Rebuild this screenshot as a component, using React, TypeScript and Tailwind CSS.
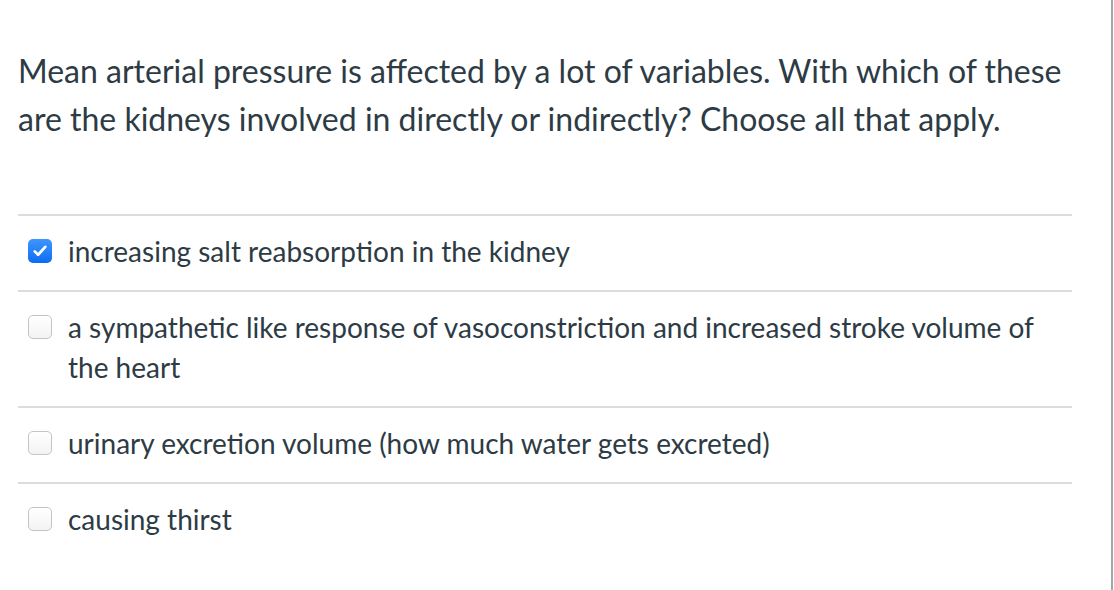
const options = [
  { text: 'increasing salt reabsorption in the kidney', checked: true },
  { text: 'a sympathetic like response of vasoconstriction and increased stroke volume of the heart', checked: false },
  { text: 'urinary excretion volume (how much water gets excreted)', checked: false },
  { text: 'causing thirst', checked: false },
]

function Box({ checked }: { checked: boolean }) {
  if (checked) {
    return (
      <span className="flex h-6 w-6 shrink-0 items-center justify-center rounded-[5px] bg-gradient-to-b from-[#3d95ff] to-[#0a6cf2]">
        <svg viewBox="0 0 24 24" className="h-[18px] w-[18px]" fill="none" stroke="white" strokeWidth={3.6} strokeLinecap="round" strokeLinejoin="round">
          <path d="M5 12.5l4.5 4.5L19 6.5" />
        </svg>
      </span>
    )
  }
  return <span className="h-6 w-6 shrink-0 rounded-[5px] border border-[#c4c4c4] bg-gradient-to-b from-white to-[#f3f3f3]" />
}

export default function App() {
  return (
    <div className="min-h-[590px] w-[1113px] border-r-[2px] border-[#a6a6a6] bg-white text-[#2d3b45]" style={{ fontFamily: 'Lato, "Noto Sans", sans-serif' }}>
      <div className="pl-[18px] pr-[39px] pt-[47px]">
        <p className="text-[32px] leading-[48px]">
          Mean arterial pressure is affected by a lot of variables. With which of these are the kidneys involved in directly or indirectly? Choose all that apply.
        </p>
        <div className="mt-[71px]">
          {options.map((o, i) => (
            <div key={i} className="flex items-start gap-4 border-t-2 border-[#dcdcdc] pb-[19px] pl-[10px] pt-[15px]">
              <div className="flex h-[40px] items-center">
                <Box checked={o.checked} />
              </div>
              <span className="text-[28px] leading-[40px]">{o.text}</span>
            </div>
          ))}
        </div>
      </div>
    </div>
  )
}
